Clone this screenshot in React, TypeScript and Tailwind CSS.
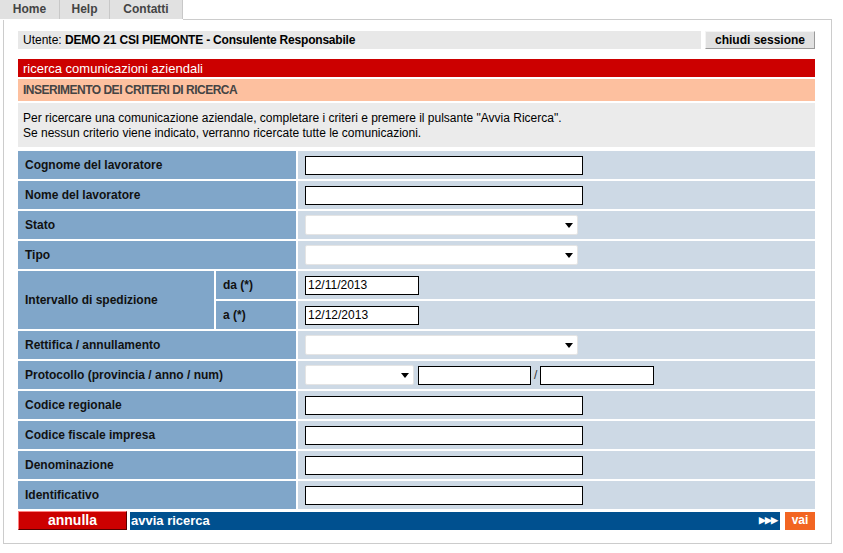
import type { ReactNode } from "react";

function Tab({ label, w }: { label: string; w: string }) {
  return (
    <div
      className={`${w} h-full flex items-center justify-center border-r border-[#c8c8c8] font-bold text-[#444]`}
    >
      {label}
    </div>
  );
}

function TextBox({ w = "w-[278px]", value = "" }: { w?: string; value?: string }) {
  return (
    <div
      className={`${w} h-[19px] bg-white border border-black flex items-center px-[2px] text-[12px] text-black`}
    >
      {value}
    </div>
  );
}

function SelectBox({ w = "w-[273px]" }: { w?: string }) {
  return (
    <div
      className={`${w} h-[20px] bg-white rounded-[2px] border border-[#e4e4e4] flex items-center justify-end pr-[4px]`}
    >
      <span className="w-0 h-0 border-l-[4px] border-r-[4px] border-t-[5px] border-l-transparent border-r-transparent border-t-black" />
    </div>
  );
}

function Row({ label, children }: { label: string; children: ReactNode }) {
  return (
    <div className="flex gap-[2px] h-[28px] mb-[2px]">
      <div className="w-[278px] bg-[#80a6c9] flex items-center pl-[7px] font-bold text-[#111]">
        {label}
      </div>
      <div className="flex-1 bg-[#cdd9e5] flex items-center pl-[7px]">{children}</div>
    </div>
  );
}

export default function App() {
  return (
    <div className="w-[843px] h-[553px] bg-white font-['Liberation_Sans',Arial,sans-serif] text-[12px] leading-[15px] text-black">
      {/* tabs */}
      <div className="flex h-[20px]">
        <div className="flex h-[19px] bg-[#e1e1e1]">
          <Tab label="Home" w="w-[60px]" />
          <Tab label="Help" w="w-[50px]" />
          <Tab label="Contatti" w="w-[73px]" />
        </div>
        <div className="flex-1 border-b border-[#cccccc] mr-[11px]" />
      </div>

      {/* panel */}
      <div className="ml-[3px] w-[829px] border-l border-r border-b border-[#cccccc] pl-[14px] pr-[16px] pt-[11px] pb-[13px]">
        <div className="flex gap-[4px] h-[18px]">
          <div className="flex-1 bg-[#e8e8e8] flex items-center pl-[5px]">
            Utente:&nbsp;<span className="font-bold tracking-[-0.2px]">DEMO 21 CSI PIEMONTE - Consulente Responsabile</span>
          </div>
          <div className="w-[110px] bg-[#e1e1e1] border-t border-l border-t-[#f4f4f4] border-l-[#f4f4f4] border-r border-b border-r-[#9a9a9a] border-b-[#9a9a9a] flex items-center justify-center font-bold">
            chiudi sessione
          </div>
        </div>

        <div className="mt-[10px] h-[18px] bg-[#cc0000] text-white text-[13px] flex items-center pl-[5px]">
          ricerca comunicazioni aziendali
        </div>
        <div className="mt-[2px] h-[22px] bg-[#fdc09f] flex items-center pl-[5px] font-bold tracking-[-0.5px] text-[#444]">
          INSERIMENTO DEI CRITERI DI RICERCA
        </div>
        <div className="mt-[2px] h-[44px] bg-[#ebebeb] pl-[5px] pt-[8px]">
          <div>Per ricercare una comunicazione aziendale, completare i criteri e premere il pulsante "Avvia Ricerca".</div>
          <div>Se nessun criterio viene indicato, verranno ricercate tutte le comunicazioni.</div>
        </div>

        <div className="mt-[4px]">
          <Row label="Cognome del lavoratore">
            <TextBox />
          </Row>
          <Row label="Nome del lavoratore">
            <TextBox />
          </Row>
          <Row label="Stato">
            <SelectBox />
          </Row>
          <Row label="Tipo">
            <SelectBox />
          </Row>

          {/* intervallo di spedizione */}
          <div className="flex gap-[2px] mb-[2px]">
            <div className="w-[196px] bg-[#80a6c9] flex items-center pl-[7px] font-bold text-[#111]">
              Intervallo di spedizione
            </div>
            <div className="flex-1 flex flex-col gap-[2px]">
              <div className="flex gap-[2px] h-[28px]">
                <div className="w-[80px] bg-[#80a6c9] flex items-center pl-[7px] font-bold text-[#111]">da (*)</div>
                <div className="flex-1 bg-[#cdd9e5] flex items-center pl-[7px]">
                  <TextBox w="w-[114px]" value="12/11/2013" />
                </div>
              </div>
              <div className="flex gap-[2px] h-[28px]">
                <div className="w-[80px] bg-[#80a6c9] flex items-center pl-[7px] font-bold text-[#111]">a (*)</div>
                <div className="flex-1 bg-[#cdd9e5] flex items-center pl-[7px]">
                  <TextBox w="w-[114px]" value="12/12/2013" />
                </div>
              </div>
            </div>
          </div>

          <Row label="Rettifica / annullamento">
            <SelectBox />
          </Row>
          <Row label="Protocollo (provincia / anno / num)">
            <SelectBox w="w-[109px]" />
            <div className="ml-[4px]">
              <TextBox w="w-[113px]" />
            </div>
            <span className="mx-[3px] text-[#333]">/</span>
            <TextBox w="w-[114px]" />
          </Row>
          <Row label="Codice regionale">
            <TextBox />
          </Row>
          <Row label="Codice fiscale impresa">
            <TextBox />
          </Row>
          <Row label="Denominazione">
            <TextBox />
          </Row>
          <Row label="Identificativo">
            <TextBox />
          </Row>
        </div>

        {/* actions */}
        <div className="mt-[1px] flex items-center h-[19px]">
          <div className="w-[109px] h-[19px] bg-[#cc0000] border-t border-l border-t-[#ff8080] border-l-[#ff8080] border-r border-b border-r-[#550000] border-b-[#550000] flex items-center justify-center font-bold text-white text-[14px]">
            annulla
          </div>
          <div className="ml-[3px] w-[650px] h-[18px] bg-[#00508f] flex items-center justify-between text-white font-bold">
            <span className="pl-[1px] text-[13px]">avvia ricerca</span>
            <span className="pr-[3px] text-[9px] tracking-[-1px]">▶▶▶</span>
          </div>
          <div className="ml-[5px] w-[30px] h-[18px] bg-[#f26522] flex items-center justify-center font-bold text-white">
            vai
          </div>
        </div>
      </div>
    </div>
  );
}
